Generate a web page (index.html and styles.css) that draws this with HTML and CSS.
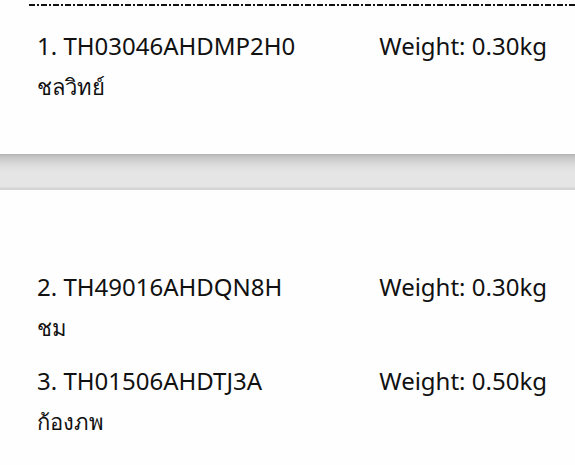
FILE: index.html
```html
<!DOCTYPE html>
<html>
<head>
<meta charset="utf-8">
<link rel="stylesheet" href="styles.css">
</head>
<body>
<div class="cut-line"></div>
<section class="group group-first">
  <div class="item">
    <div class="row"><span class="code">1. TH03046AHDMP2H0</span><span class="weight">Weight: 0.30kg</span></div>
    <div class="name">ชลวิทย์</div>
  </div>
</section>
<div class="band"></div>
<section class="group group-second">
  <div class="item">
    <div class="row"><span class="code">2. TH49016AHDQN8H</span><span class="weight">Weight: 0.30kg</span></div>
    <div class="name">ชม</div>
  </div>
  <div class="item">
    <div class="row"><span class="code">3. TH01506AHDTJ3A</span><span class="weight">Weight: 0.50kg</span></div>
    <div class="name">ก้องภพ</div>
  </div>
</section>
</body>
</html>
```
FILE: styles.css
```css
html, body {
  margin: 0;
  padding: 0;
  background: #fefefe;
}
body {
  width: 575px;
  height: 465px;
  overflow: hidden;
  font-family: "Noto Sans", "Open Sans", sans-serif;
  color: #111;
}
.cut-line {
  margin: 4px 0 0 29px;
  height: 2px;
  background: repeating-linear-gradient(90deg, #111 0 6px, transparent 6px 8px, #111 8px 10px, transparent 10px 12px);
}
.group-first {
  margin-top: 20px;
}
.item {
  padding: 0 28px 0 37px;
  line-height: 40px;
}
.item + .item {
  margin-top: 14px;
}
.row {
  display: flex;
  justify-content: space-between;
  font-size: 24px;
}
.name {
  font-size: 22px;
}
.band {
  margin-top: 48px;
  height: 36px;
  background: linear-gradient(#b3b3b3 0, #c6c6c6 3px, #dedede 12px, #e5e5e5 18px, #e5e5e5 33px, #d4d4d4 34px, #d4d4d4 36px);
}
.group-second {
  margin-top: 77px;
}
```
